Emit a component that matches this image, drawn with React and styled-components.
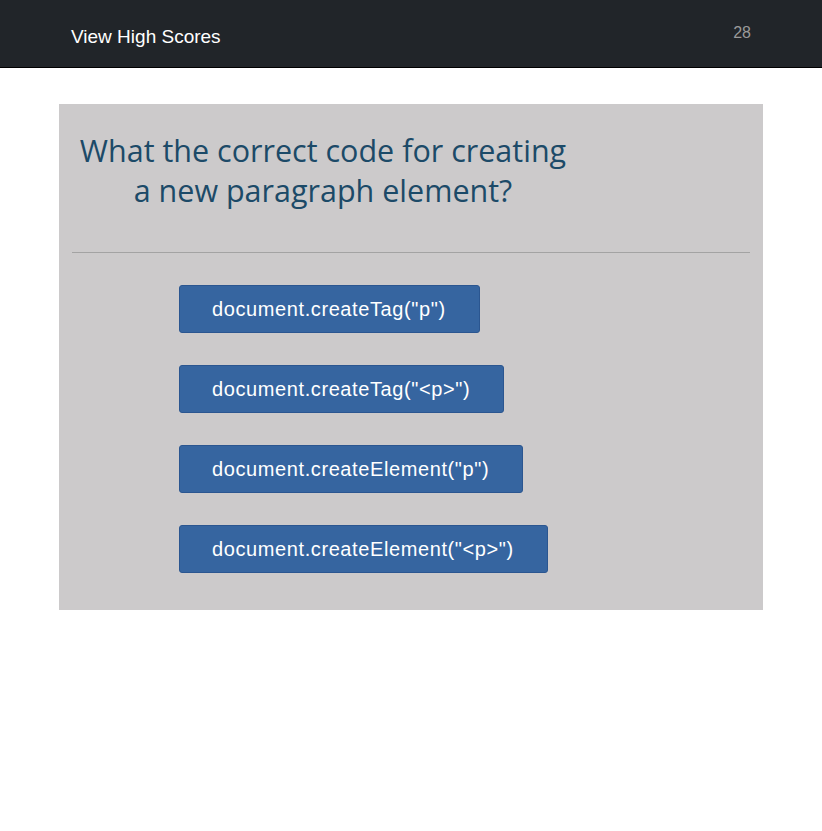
import React from 'react'
import styled, { createGlobalStyle } from 'styled-components'

const GlobalStyle = createGlobalStyle`
  html, body {
    margin: 0;
    padding: 0;
    background: #fff;
  }
  body {
    font-family: "Liberation Sans", Arial, sans-serif;
  }
`

const Header = styled.header`
  height: 67px;
  background-color: #212529;
  border-bottom: 1px solid #000;
  display: flex;
  align-items: center;
  justify-content: space-between;
  padding: 0 70px 0 71px;
`

const HighScores = styled.a`
  color: #fff;
  font-size: 19px;
  text-decoration: none;
  margin-top: 7px;
  cursor: pointer;
`

const Timer = styled.span`
  color: #9a9a9a;
  font-size: 16px;
  margin-top: -1px;
  margin-right: 1px;
`

const Main = styled.main`
  padding: 36px 59px 0 59px;
`

const Card = styled.section`
  background-color: #cccacb;
  padding: 26px 13px 37px 13px;
`

const Question = styled.h1`
  margin: 0;
  text-align: center;
  font-family: "Open Sans", "Noto Sans", sans-serif;
  font-weight: 400;
  font-size: 30.5px;
  line-height: 40px;
  color: #1c4a68;
  padding-bottom: 42px;
  border-bottom: 1px solid #a3a3a3;
`

const QuestionText = styled.span`
  display: block;
  width: 502px;
`

const Choices = styled.ol`
  list-style: none;
  margin: 0;
  padding: 32px 0 0 107px;
  display: flex;
  flex-direction: column;
  align-items: flex-start;
  gap: 32px;
`

const Choice = styled.button`
  height: 48px;
  padding: 0 33px 0 32px;
  background-color: #3665a0;
  border: 1px solid #2b5690;
  border-radius: 3px;
  color: #fff;
  font-family: "Liberation Sans", Arial, sans-serif;
  font-size: 20px;
  letter-spacing: 0.6px;
  cursor: pointer;
`

const choices = [
  'document.createTag("p")',
  'document.createTag("<p>")',
  'document.createElement("p")',
  'document.createElement("<p>")'
]

const App = () => {
  return (
    <>
      <GlobalStyle />
      <Header>
        <HighScores>View High Scores</HighScores>
        <Timer>28</Timer>
      </Header>
      <Main>
        <Card>
          <Question>
            <QuestionText>What the correct code for creating a new paragraph element?</QuestionText>
          </Question>
          <Choices>
            {choices.map((c, i) => (
              <li key={`choice_${i}`}>
                <Choice>{c}</Choice>
              </li>
            ))}
          </Choices>
        </Card>
      </Main>
    </>
  )
}

export default App
